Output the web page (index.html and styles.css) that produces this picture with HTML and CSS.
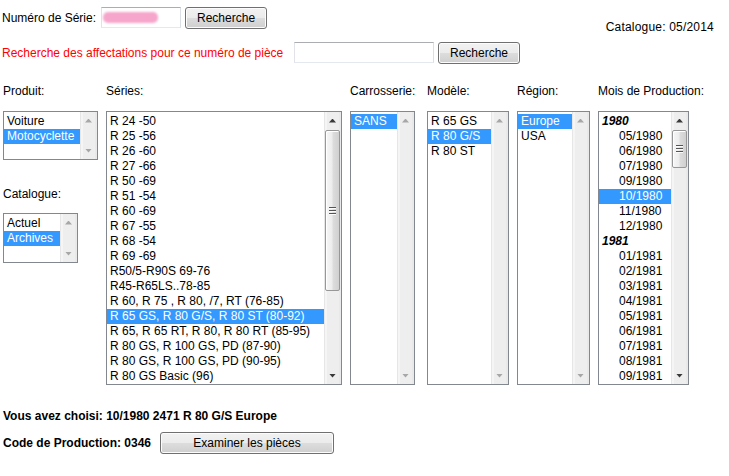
FILE: index.html
```html
<!DOCTYPE html>
<html lang="fr">
<head>
<meta charset="utf-8">
<title>Catalogue</title>
<link rel="stylesheet" href="styles.css">
</head>
<body>
<div class="page">
  <div class="search">
    <div class="search-fields">
      <div class="search-row">
        <span class="lbl serial-lbl">Numéro de Série:</span>
        <span class="textbox tb-serial"><span class="redacted"></span></span>
        <span class="btn btn-search">Recherche</span>
      </div>
      <div class="search-row">
        <span class="lbl red part-lbl">Recherche des affectations pour ce numéro de pièce</span>
        <span class="textbox tb-part"></span>
        <span class="btn btn-search">Recherche</span>
      </div>
    </div>
    <div class="catalogue-date">Catalogue: 05/2014</div>
  </div>

  <div class="columns">
    <div class="col col-produit">
      <div class="col-label">Produit:</div>
      <div class="listbox lb-produit">
        <div class="options">
          <div class="opt">Voiture</div>
          <div class="opt sel">Motocyclette</div>
        </div>
        <div class="scrollbar"><div class="arrow up"></div><div class="track"></div><div class="arrow down"></div></div>
      </div>
      <div class="col-label label-catalogue">Catalogue:</div>
      <div class="listbox lb-catalogue">
        <div class="options">
          <div class="opt">Actuel</div>
          <div class="opt sel">Archives</div>
        </div>
        <div class="scrollbar"><div class="arrow up"></div><div class="track"></div><div class="arrow down"></div></div>
      </div>
    </div>

    <div class="col col-series">
      <div class="col-label">Séries:</div>
      <div class="listbox tall">
        <div class="options">
          <div class="opt">R 24 -50</div>
          <div class="opt">R 25 -56</div>
          <div class="opt">R 26 -60</div>
          <div class="opt">R 27 -66</div>
          <div class="opt">R 50 -69</div>
          <div class="opt">R 51 -54</div>
          <div class="opt">R 60 -69</div>
          <div class="opt">R 67 -55</div>
          <div class="opt">R 68 -54</div>
          <div class="opt">R 69 -69</div>
          <div class="opt">R50/5-R90S 69-76</div>
          <div class="opt">R45-R65LS..78-85</div>
          <div class="opt">R 60, R 75 , R 80, /7, RT (76-85)</div>
          <div class="opt sel">R 65 GS, R 80 G/S, R 80 ST (80-92)</div>
          <div class="opt">R 65, R 65 RT, R 80, R 80 RT (85-95)</div>
          <div class="opt">R 80 GS, R 100 GS, PD (87-90)</div>
          <div class="opt">R 80 GS, R 100 GS, PD (90-95)</div>
          <div class="opt">R 80 GS Basic (96)</div>
        </div>
        <div class="scrollbar active"><div class="arrow up"></div><div class="track"><div class="thumb thumb-series"><span class="grip"></span></div></div><div class="arrow down"></div></div>
      </div>
    </div>

    <div class="col col-carr">
      <div class="col-label">Carrosserie:</div>
      <div class="listbox tall lb-carr">
        <div class="options">
          <div class="opt sel">SANS</div>
        </div>
        <div class="scrollbar"><div class="arrow up"></div><div class="track"></div><div class="arrow down"></div></div>
      </div>
    </div>

    <div class="col col-modele">
      <div class="col-label">Modèle:</div>
      <div class="listbox tall">
        <div class="options">
          <div class="opt">R 65 GS</div>
          <div class="opt sel">R 80 G/S</div>
          <div class="opt">R 80 ST</div>
        </div>
        <div class="scrollbar"><div class="arrow up"></div><div class="track"></div><div class="arrow down"></div></div>
      </div>
    </div>

    <div class="col col-region">
      <div class="col-label">Région:</div>
      <div class="listbox tall">
        <div class="options">
          <div class="opt sel">Europe</div>
          <div class="opt">USA</div>
        </div>
        <div class="scrollbar"><div class="arrow up"></div><div class="track"></div><div class="arrow down"></div></div>
      </div>
    </div>

    <div class="col col-mois">
      <div class="col-label">Mois de Production:</div>
      <div class="listbox tall">
        <div class="options">
          <div class="opt group">1980</div>
          <div class="opt sub">05/1980</div>
          <div class="opt sub">06/1980</div>
          <div class="opt sub">07/1980</div>
          <div class="opt sub">09/1980</div>
          <div class="opt sub sel">10/1980</div>
          <div class="opt sub">11/1980</div>
          <div class="opt sub">12/1980</div>
          <div class="opt group">1981</div>
          <div class="opt sub">01/1981</div>
          <div class="opt sub">02/1981</div>
          <div class="opt sub">03/1981</div>
          <div class="opt sub">04/1981</div>
          <div class="opt sub">05/1981</div>
          <div class="opt sub">06/1981</div>
          <div class="opt sub">07/1981</div>
          <div class="opt sub">08/1981</div>
          <div class="opt sub">09/1981</div>
        </div>
        <div class="scrollbar active"><div class="arrow up"></div><div class="track"><div class="thumb thumb-mois"><span class="grip"></span></div></div><div class="arrow down"></div></div>
      </div>
    </div>
  </div>

  <div class="summary">
    <div class="summary-line">Vous avez choisi: 10/1980 2471 R 80 G/S Europe</div>
    <div class="code-row">
      <span class="code-lbl">Code de Production: 0346</span>
      <span class="btn btn-exam">Examiner les pièces</span>
    </div>
  </div>
</div>
</body>
</html>
```
FILE: styles.css
```css
* { box-sizing: border-box; }

body {
  margin: 0;
  font-family: "Liberation Sans", Arial, sans-serif;
  font-size: 12px;
  color: #000;
  background: #fff;
}

.page {
  width: 729px;
  height: 476px;
  padding-top: 7px;
}

/* search area */
.search {
  display: flex;
  justify-content: space-between;
  padding: 0 15px 0 2px;
}

.search-fields {
  display: flex;
  flex-direction: column;
  gap: 13px;
}

.search-row {
  display: flex;
  align-items: flex-start;
  gap: 4px;
  height: 22px;
}

.lbl {
  line-height: 22px;
  white-space: nowrap;
}

.serial-lbl { margin-right: 1px; }
.part-lbl { width: 288px; }

.red { color: #f00; }

.textbox {
  position: relative;
  height: 21px;
  border: 1px solid;
  border-color: #abadb3 #dbdfe6 #e3e9ef #e2e3ea;
  background: #fff;
}

.tb-serial { width: 80px; }
.tb-part { width: 140px; }

.redacted {
  position: absolute;
  left: 1px;
  top: 4px;
  width: 55px;
  height: 11px;
  border-radius: 5px;
  background: #f6a6cb;
  filter: blur(0.8px);
}

.btn {
  display: flex;
  align-items: center;
  justify-content: center;
  height: 22px;
  border: 1px solid #707070;
  border-radius: 3px;
  background: linear-gradient(#f2f2f2, #ebebeb 50%, #dddddd 50%, #cfcfcf);
  box-shadow: inset 0 0 0 1px #fcfcfc;
  white-space: nowrap;
}

.btn-search { width: 82px; }

.catalogue-date {
  padding-top: 13px;
  line-height: 15px;
  letter-spacing: 0.2px;
}

/* columns */
.columns {
  display: flex;
  gap: 8px;
  padding-left: 3px;
  margin-top: 20px;
}

.col-label {
  height: 15px;
  line-height: 15px;
  margin-bottom: 12px;
  white-space: nowrap;
}

.label-catalogue {
  margin-top: 27px;
  margin-bottom: 11px;
}

.col-produit { width: 95px; }
.col-series { width: 236px; }
.col-carr { width: 69px; }
.col-modele { width: 82px; }
.col-region { width: 73px; }
.col-mois { width: 91px; }

.listbox {
  display: flex;
  border: 1px solid #828790;
  background: #fff;
}

.tall { height: 274px; }
.lb-produit { height: 49px; }
.lb-catalogue { width: 75px; height: 50px; }
.lb-carr { width: 65px; }

.options {
  flex: 1;
  min-width: 0;
  overflow: hidden;
  padding-top: 2px;
}

.opt {
  height: 15px;
  line-height: 15px;
  padding-left: 3px;
  white-space: nowrap;
}

.opt.sel {
  background: #3399ff;
  color: #fff;
}

.opt.group {
  font-weight: bold;
  font-style: italic;
  padding-left: 3px;
}

.opt.sub { padding-left: 20px; }

/* scrollbars */
.scrollbar {
  flex: none;
  width: 17px;
  display: flex;
  flex-direction: column;
  background: linear-gradient(to right, #e6e6e6 0 1px, #f5f5f5 1px 3px, #eeeeee 3px 15px, #e9e9e9 15px);
}

.arrow {
  flex: none;
  height: 17px;
  display: flex;
  align-items: center;
  justify-content: center;
}

.arrow::before {
  content: "";
  width: 7px;
  height: 4px;
  background: #a7a7a7;
  clip-path: polygon(50% 0, 100% 100%, 0 100%);
}

.arrow.down::before {
  clip-path: polygon(0 0, 100% 0, 50% 100%);
}

.scrollbar.active .arrow::before { background: #3a3a3a; }

.track {
  flex: 1;
  padding: 1px 1px 0;
}

.thumb {
  display: flex;
  align-items: center;
  justify-content: center;
  width: 15px;
  border: 1px solid #979797;
  border-radius: 2px;
  background: linear-gradient(to right, #f6f6f6 0%, #ededed 45%, #dcdcdc 55%, #d0d0d0 100%);
  box-shadow: inset 1px 1px 0 #ffffff;
}

.thumb-series { height: 161px; }
.thumb-mois { height: 38px; }

.grip {
  width: 7px;
  height: 8px;
  background: repeating-linear-gradient(#555555 0 1px, #fbfbfb 1px 2px, transparent 2px 3px);
}

/* summary */
.summary {
  padding-left: 3px;
  margin-top: 24px;
  font-weight: bold;
}

.summary-line {
  height: 15px;
  line-height: 15px;
}

.code-row {
  display: flex;
  align-items: center;
  height: 22px;
  margin-top: 8px;
}

.code-lbl {
  width: 157px;
  white-space: nowrap;
}

.btn-exam {
  width: 174px;
  font-weight: normal;
}
```
